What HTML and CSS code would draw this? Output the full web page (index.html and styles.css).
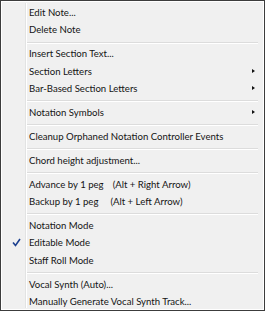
FILE: index.html
```html
<!DOCTYPE html>
<html>
<head>
<meta charset="utf-8">
<link rel="stylesheet" href="styles.css">
</head>
<body>
<div class="menu">
  <div class="item">Edit Note...</div>
  <div class="item">Delete Note</div>
  <div class="sep"></div>
  <div class="item">Insert Section Text...</div>
  <div class="item sub">Section Letters</div>
  <div class="item sub">Bar-Based Section Letters</div>
  <div class="sep"></div>
  <div class="item sub">Notation Symbols</div>
  <div class="sep"></div>
  <div class="item">Cleanup Orphaned Notation Controller Events</div>
  <div class="sep"></div>
  <div class="item">Chord height adjustment...</div>
  <div class="sep"></div>
  <div class="item"><span class="lbl">Advance by 1 peg</span><span class="key adv">(Alt + Right Arrow)</span></div>
  <div class="item"><span class="lbl">Backup by 1 peg</span><span class="key bak">(Alt + Left Arrow)</span></div>
  <div class="sep"></div>
  <div class="item">Notation Mode</div>
  <div class="item checked"><svg class="check" width="9" height="9" viewBox="0 0 9 9"><path d="M1 4.5 L3.5 7.5 L8 1" fill="none" stroke="#1b3f8f" stroke-width="1.6"/></svg>Editable Mode</div>
  <div class="item">Staff Roll Mode</div>
  <div class="sep"></div>
  <div class="item">Vocal Synth (Auto)...</div>
  <div class="item">Manually Generate Vocal Synth Track...</div>
</div>
</body>
</html>
```
FILE: styles.css
```css
html, body {
  margin: 0;
  padding: 0;
  background: #ffffff;
}
.menu {
  box-sizing: border-box;
  width: 265px;
  height: 311px;
  border: 1px solid #3c3c3c;
  box-shadow: inset 1px 1px 0 #ffffff, inset -1px -1px 0 #ffffff;
  background: #f0f0f0;
  padding: 3px 2px 0 2px;
  position: relative;
  font-family: "Lato", "Open Sans", sans-serif;
  font-size: 9.6px;
  color: #141414;
}
.menu::before {
  content: "";
  position: absolute;
  left: 24px;
  top: 2px;
  bottom: 2px;
  width: 1px;
  background: #e2e3e3;
  box-shadow: 1px 0 0 #ffffff;
}
.item {
  position: relative;
  height: 17.3px;
  line-height: 17.3px;
  padding-left: 26px;
  white-space: nowrap;
}
.sep {
  height: 6.7px;
  position: relative;
}
.sep::after {
  content: "";
  position: absolute;
  left: 24px;
  right: 4px;
  top: 3px;
  height: 1px;
  background: #dcdcdc;
  box-shadow: 0 1px 0 #ffffff;
}
.sub::after {
  content: "";
  position: absolute;
  right: 7px;
  top: 6.5px;
  border-top: 2.5px solid transparent;
  border-bottom: 2.5px solid transparent;
  border-left: 3px solid #111;
}
.key.adv { margin-left: 9px; }
.key.bak { margin-left: 12px; }
.check {
  position: absolute;
  left: 9px;
  top: 4px;
}
```
